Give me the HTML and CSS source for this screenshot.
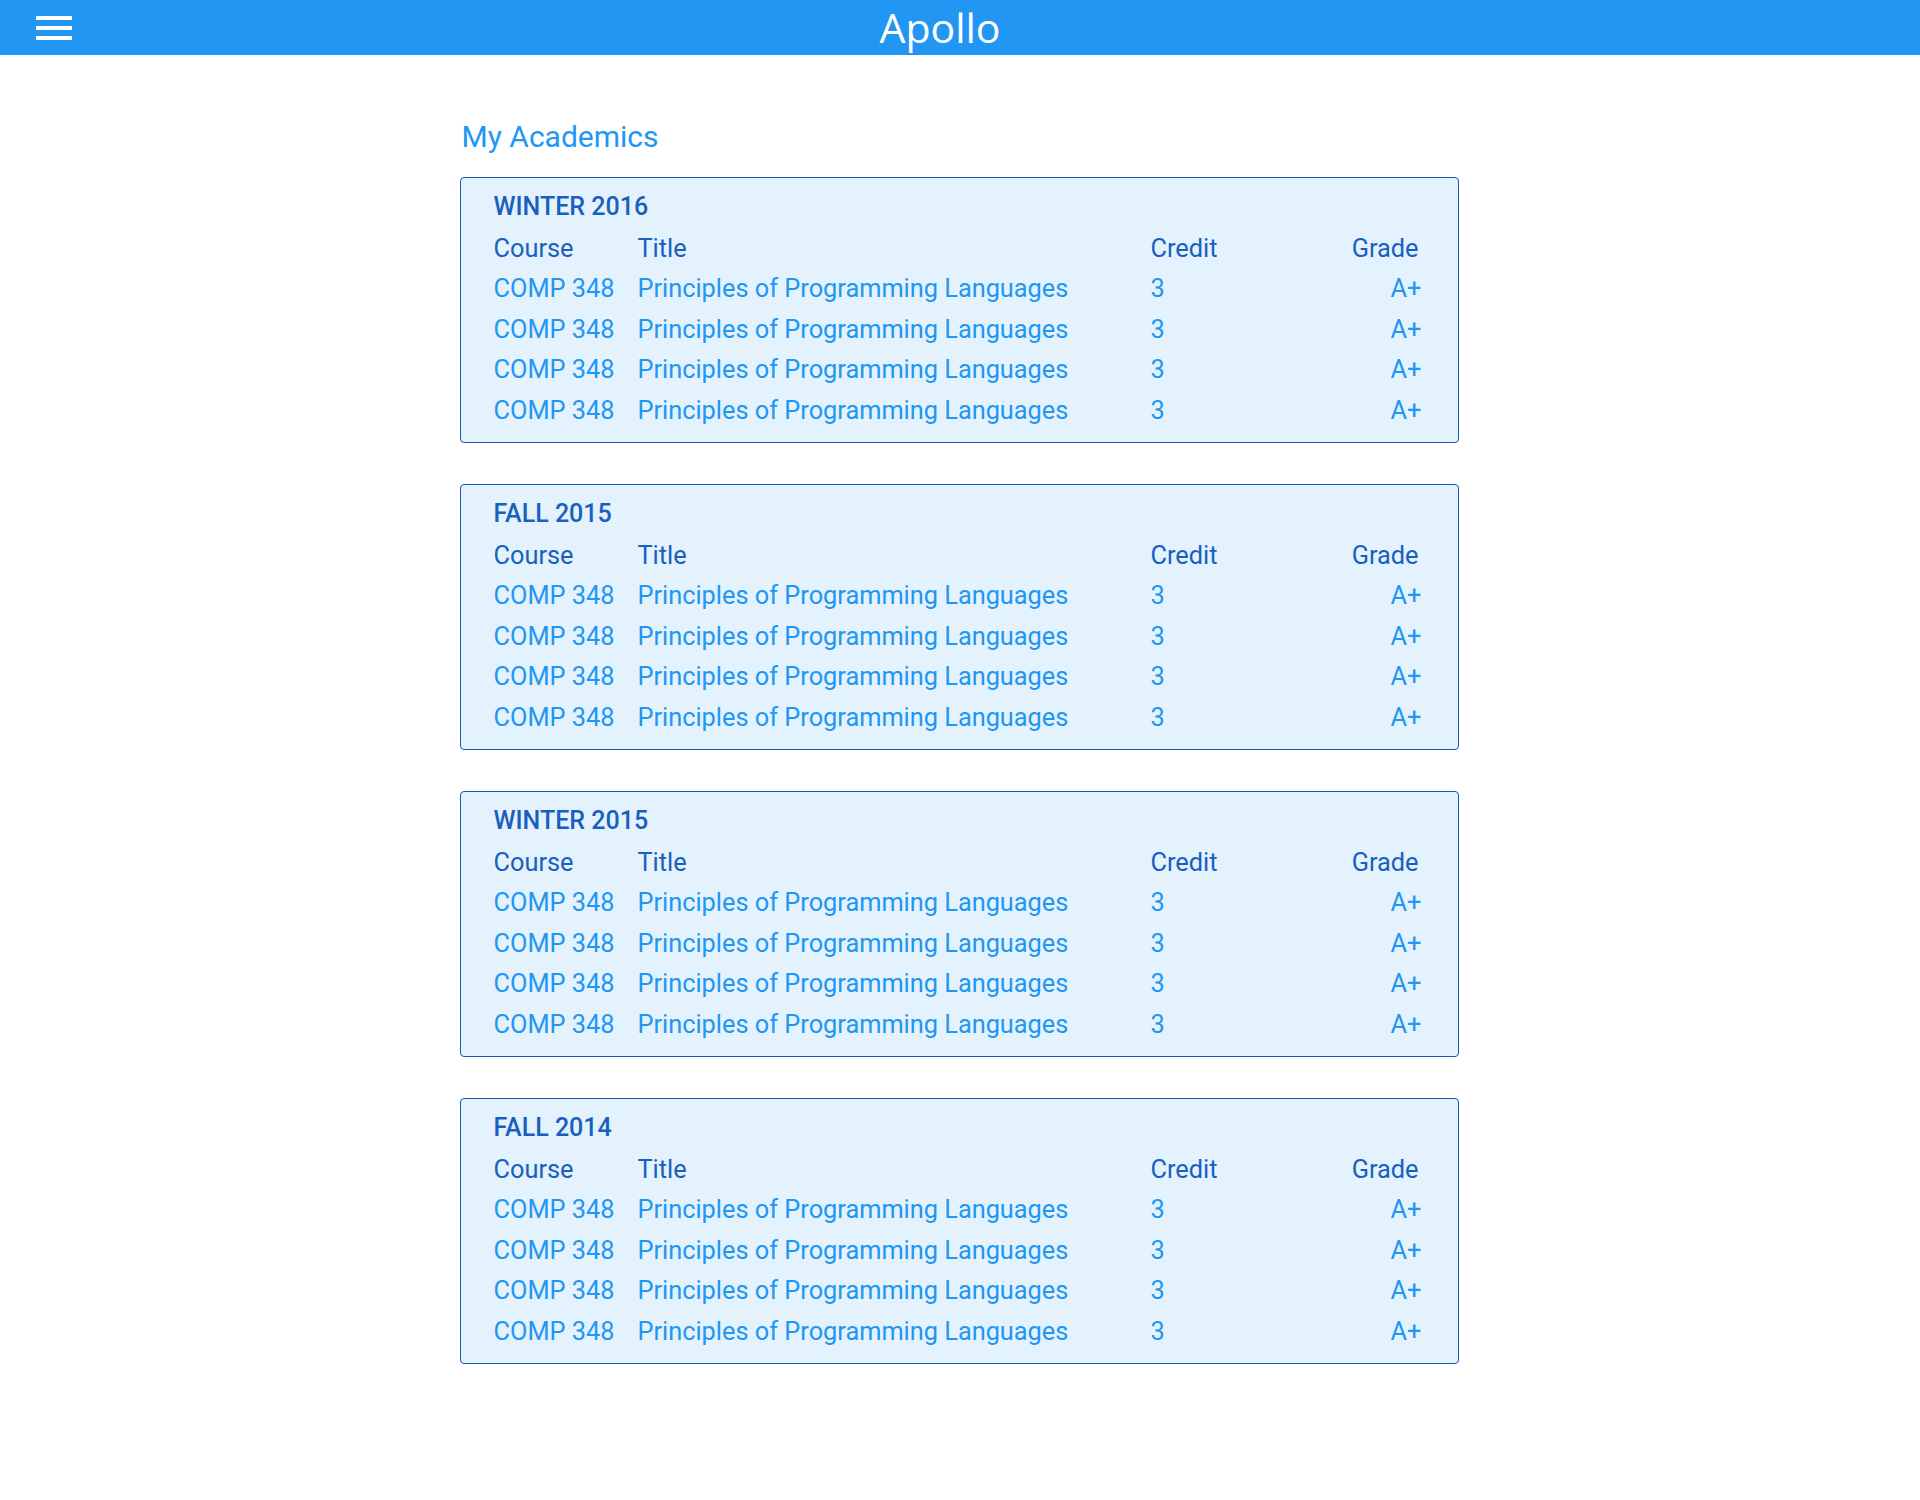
FILE: index.html
```
<!DOCTYPE html>
<html lang="en">
<head>
<meta charset="utf-8">
<title>Apollo</title>
<link rel="stylesheet" href="styles.css">
</head>
<body>
<header class="topbar">
  <button class="menu" aria-label="Menu">
    <span class="bar"></span><span class="bar"></span><span class="bar"></span>
  </button>
  <div class="brand">Apollo</div>
</header>
<main class="content">
  <h1 class="page-title">My Academics</h1>

  <section class="term">
    <h2 class="term-name">WINTER 2016</h2>
    <div class="grid">
      <div class="th">Course</div><div class="th">Title</div><div class="th">Credit</div><div class="th grade">Grade</div>
      <div class="td">COMP 348</div><div class="td">Principles of Programming Languages</div><div class="td">3</div><div class="td grade">A+</div>
      <div class="td">COMP 348</div><div class="td">Principles of Programming Languages</div><div class="td">3</div><div class="td grade">A+</div>
      <div class="td">COMP 348</div><div class="td">Principles of Programming Languages</div><div class="td">3</div><div class="td grade">A+</div>
      <div class="td">COMP 348</div><div class="td">Principles of Programming Languages</div><div class="td">3</div><div class="td grade">A+</div>
    </div>
  </section>

  <section class="term">
    <h2 class="term-name">FALL 2015</h2>
    <div class="grid">
      <div class="th">Course</div><div class="th">Title</div><div class="th">Credit</div><div class="th grade">Grade</div>
      <div class="td">COMP 348</div><div class="td">Principles of Programming Languages</div><div class="td">3</div><div class="td grade">A+</div>
      <div class="td">COMP 348</div><div class="td">Principles of Programming Languages</div><div class="td">3</div><div class="td grade">A+</div>
      <div class="td">COMP 348</div><div class="td">Principles of Programming Languages</div><div class="td">3</div><div class="td grade">A+</div>
      <div class="td">COMP 348</div><div class="td">Principles of Programming Languages</div><div class="td">3</div><div class="td grade">A+</div>
    </div>
  </section>

  <section class="term">
    <h2 class="term-name">WINTER 2015</h2>
    <div class="grid">
      <div class="th">Course</div><div class="th">Title</div><div class="th">Credit</div><div class="th grade">Grade</div>
      <div class="td">COMP 348</div><div class="td">Principles of Programming Languages</div><div class="td">3</div><div class="td grade">A+</div>
      <div class="td">COMP 348</div><div class="td">Principles of Programming Languages</div><div class="td">3</div><div class="td grade">A+</div>
      <div class="td">COMP 348</div><div class="td">Principles of Programming Languages</div><div class="td">3</div><div class="td grade">A+</div>
      <div class="td">COMP 348</div><div class="td">Principles of Programming Languages</div><div class="td">3</div><div class="td grade">A+</div>
    </div>
  </section>

  <section class="term">
    <h2 class="term-name">FALL 2014</h2>
    <div class="grid">
      <div class="th">Course</div><div class="th">Title</div><div class="th">Credit</div><div class="th grade">Grade</div>
      <div class="td">COMP 348</div><div class="td">Principles of Programming Languages</div><div class="td">3</div><div class="td grade">A+</div>
      <div class="td">COMP 348</div><div class="td">Principles of Programming Languages</div><div class="td">3</div><div class="td grade">A+</div>
      <div class="td">COMP 348</div><div class="td">Principles of Programming Languages</div><div class="td">3</div><div class="td grade">A+</div>
      <div class="td">COMP 348</div><div class="td">Principles of Programming Languages</div><div class="td">3</div><div class="td grade">A+</div>
    </div>
  </section>
</main>
</body>
</html>
```
FILE: styles.css
```
* { box-sizing: border-box; }
html, body { margin: 0; padding: 0; background: #ffffff; }
body { font-family: Roboto, "Noto Sans", Arial, sans-serif; }

.topbar {
  height: 55px;
  background: #2196F3;
  display: flex;
  align-items: center;
  padding: 0 36px;
}
.menu {
  width: 36px;
  height: 24px;
  padding: 0;
  margin: 0;
  border: 0;
  background: transparent;
  display: flex;
  flex-direction: column;
  justify-content: space-between;
  cursor: pointer;
  margin-top: 1px;
}
.bar { display: block; height: 4px; background: #ffffff; }
.brand {
  flex: 1;
  text-align: center;
  color: #ffffff;
  font-family: "Open Sans", "DejaVu Sans", sans-serif;
  font-size: 41px;
  line-height: 55px;
  padding-right: 76px;
}

.content {
  width: 999px;
  margin: 0 auto;
  padding: 62px 0 60px;
  transform: translateX(-1px);
}
.page-title {
  margin: 0 0 20px 2px;
  font-size: 30px;
  font-weight: 400;
  line-height: 40px;
  color: #2196F3;
}
.term {
  background: #E3F2FD;
  border: 1px solid #1A56B8;
  border-radius: 4px;
  padding: 8px 36px 11px 33px;
  margin-bottom: 41px;
}
.term-name {
  margin: 0;
  font-size: 25px;
  font-weight: 500;
  line-height: 42.5px;
  color: #1860C0;
}
.grid {
  display: grid;
  grid-template-columns: 144px 513px 1fr auto;
  grid-auto-rows: 40.5px;
  font-size: 25.33px;
  line-height: 40.5px;
}
.th { color: #1860C0; }
.td { color: #2196F3; }
.grade { text-align: right; }
.th.grade { padding-right: 3px; }
```
